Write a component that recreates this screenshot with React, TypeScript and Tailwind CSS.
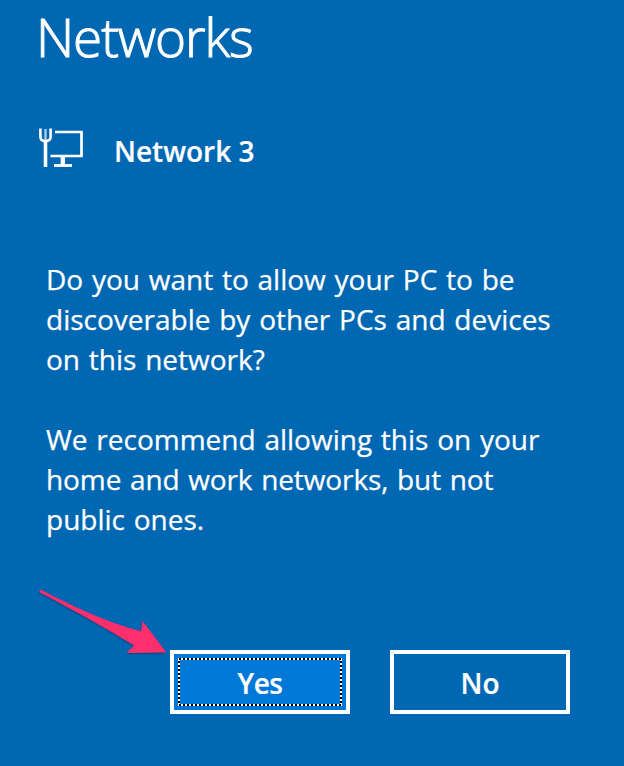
function NetworkIcon() {
  return (
    <svg className="h-[48px] w-[50px]" viewBox="0 0 50 48" fill="none" stroke="white">
      <path d="M20 4H46.5V28H15.5" strokeWidth="2.7" />
      <path d="M27.8 28V37" strokeWidth="4.4" />
      <path d="M19 37.5H37" strokeWidth="2.8" />
      <path d="M5.4 0.5V9Q5.4 13 10.4 13Q15.6 13 15.6 9V0.5" strokeWidth="2.6" />
      <path d="M10.5 1V12" strokeWidth="2.4" strokeOpacity="0.65" />
      <path d="M10.5 12V39" strokeWidth="3.6" />
    </svg>
  );
}

export default function App() {
  return (
    <main className="relative h-[766px] w-[624px] overflow-hidden bg-[#0067b3] font-['Open_Sans','Noto_Sans',sans-serif] text-white">
      <h1 className="h-[120px] pt-px pl-[36px] text-[53px] leading-[72px] font-light tracking-[-1.1px] [-webkit-text-stroke:1px_white]">Networks</h1>
      <div className="flex h-[64px] items-center pl-[35px]">
        <NetworkIcon />
        <p className="ml-[29px] pb-[2px] text-[28px] leading-[62px] font-semibold [-webkit-text-stroke:0.2px_white]">Network 3</p>
      </div>
      <div className="pt-[75px] pl-[46px] text-[28px] leading-[40px] whitespace-nowrap [word-spacing:1.5px] [-webkit-text-stroke:0.25px_white]">
        <p>
          Do you want to allow your PC to be
          <br />
          discoverable by other PCs and devices
          <br />
          on this network?
        </p>
        <p className="mt-[40px]">
          We recommend allowing this on your
          <br />
          <span className="tracking-[-0.1px]">home and work networks, but not</span>
          <br />
          public ones.
        </p>
      </div>
      <div className="mt-[111px] ml-[170px] flex gap-[40px] text-[28px] font-semibold [-webkit-text-stroke:0.2px_white]">
        <button className="relative h-[64px] w-[180px] border-4 border-white bg-[#0078d7] pt-[2px] tracking-[-0.5px]">
          Yes
          <svg className="absolute top-[4px] left-[4px] h-[48px] w-[164px]" viewBox="0 0 164 48" fill="none" strokeWidth="2">
            <rect x="1" y="1" width="162" height="46" stroke="white" />
            <rect x="1" y="1" width="162" height="46" stroke="black" strokeDasharray="2 2" />
          </svg>
        </button>
        <button className="h-[64px] w-[180px] border-4 border-white pt-[2px]">No</button>
      </div>
      <svg className="absolute top-[580px] left-[30px] h-[90px] w-[150px] drop-shadow-[0_1px_1px_rgba(0,0,0,0.35)]" viewBox="0 0 150 90">
        <path d="M9.3 10.5Q10 9.5 12 10.3C42 26 78 43 111 51.3L112.5 41L136.5 72.5L96.5 73L104 65.5C76 48 43 30 10 12.5Q9 11.5 9.3 10.5Z" fill="#ff2f6d" />
      </svg>
    </main>
  );
}
